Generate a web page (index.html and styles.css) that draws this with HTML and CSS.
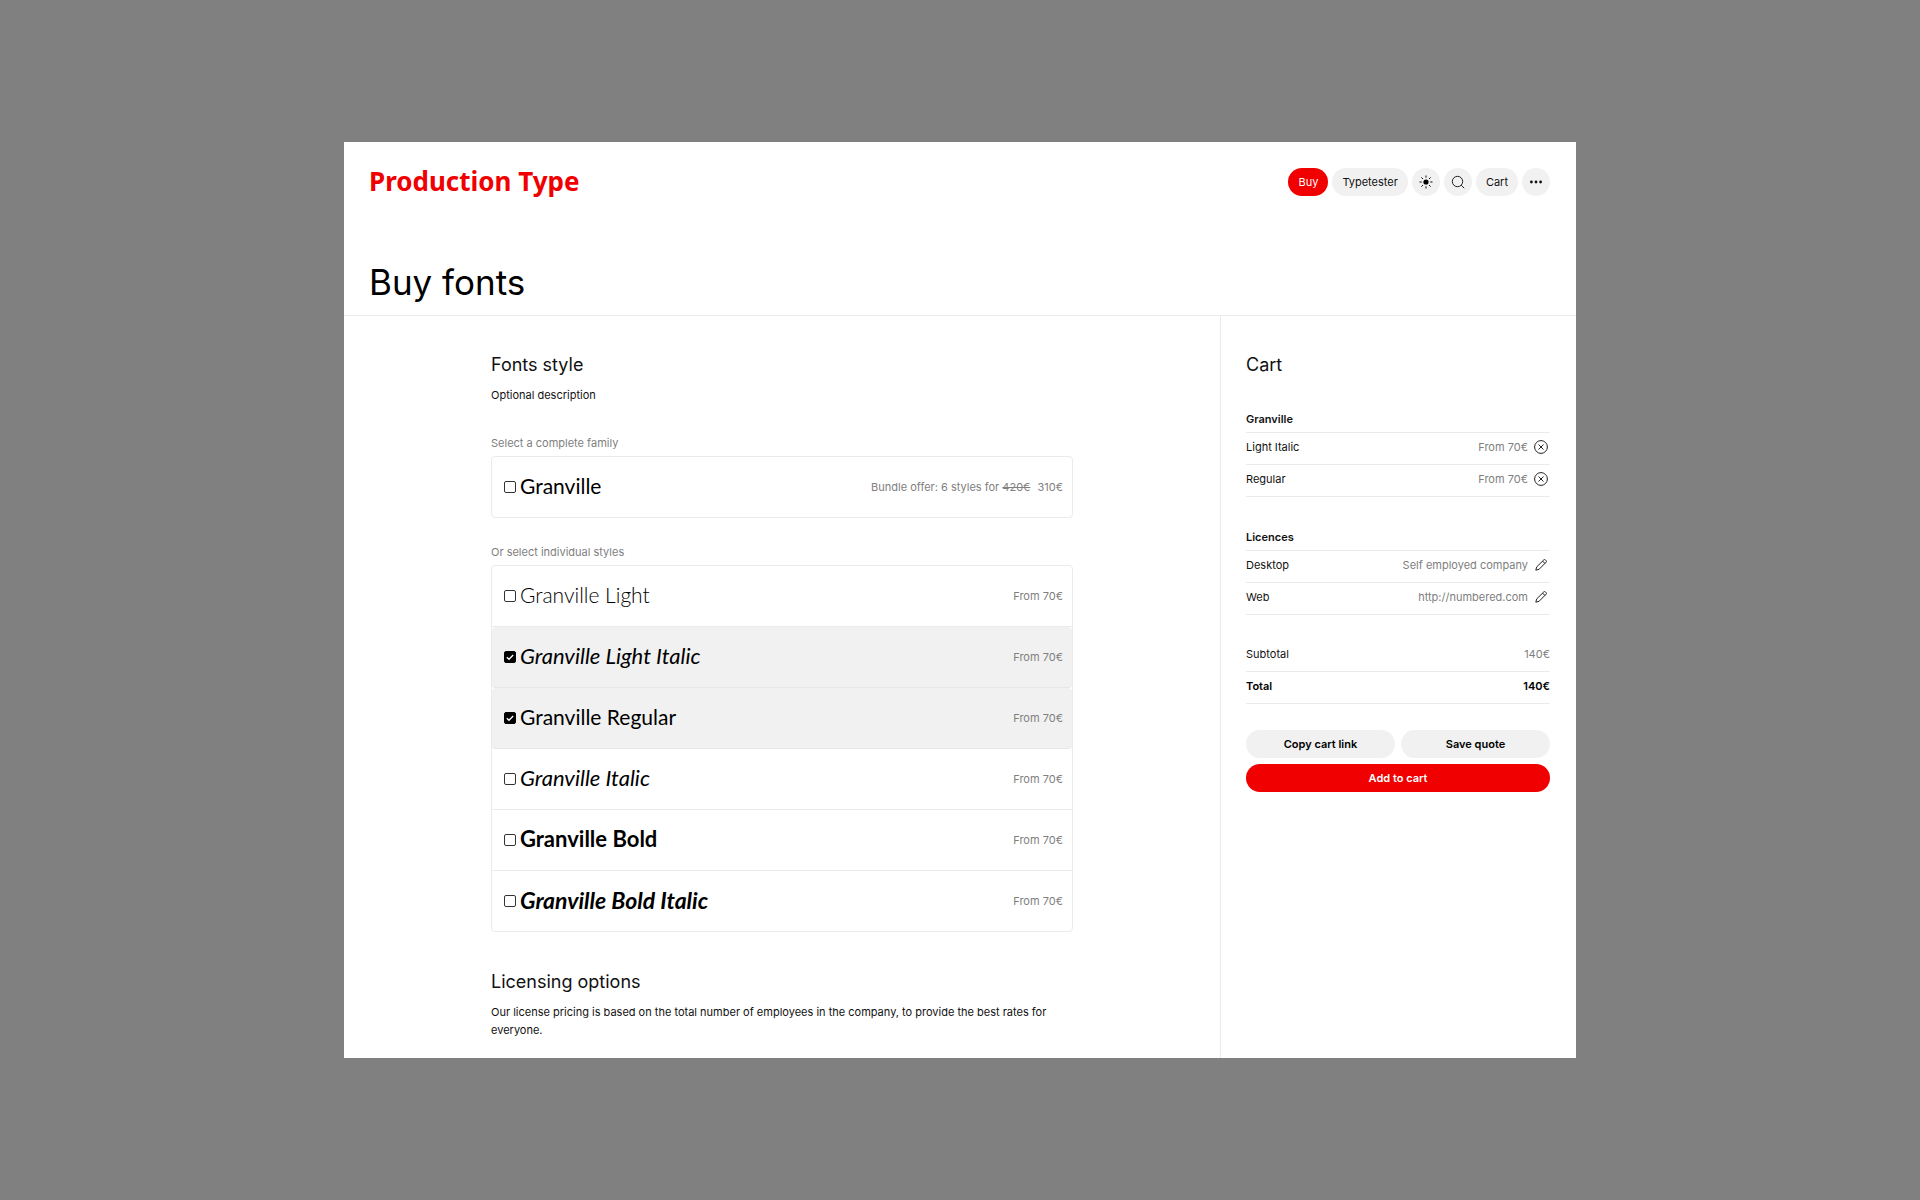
FILE: index.html
```html
<!DOCTYPE html>
<html lang="en">
<head>
<meta charset="utf-8">
<title>Buy fonts – Production Type</title>
<meta name="viewport" content="width=device-width, initial-scale=1">
<link rel="stylesheet" href="styles.css">
</head>
<body>
<div class="window">
  <header class="header">
    <div class="topbar">
      <a class="logo" href="#">Production Type</a>
      <nav class="nav">
        <a class="pill pill-primary" href="#">Buy</a>
        <a class="pill" href="#">Typetester</a>
        <button class="pill pill-icon" type="button" aria-label="Theme">
          <svg width="14" height="14" viewBox="0 0 14 14" fill="none" stroke="#111" stroke-width="1"><circle cx="7" cy="7" r="2.6" fill="#000" stroke="none"/><path d="M7 .5v2.2M7 11.3v2.2M.5 7h2.2M11.3 7h2.2M2.4 2.4 4 4M10 10l1.6 1.6M11.6 2.4 10 4M4 10l-1.6 1.6"/></svg>
        </button>
        <button class="pill pill-icon" type="button" aria-label="Search">
          <svg width="14" height="14" viewBox="0 0 14 14" fill="none" stroke="#222" stroke-width="1"><circle cx="6.5" cy="6.5" r="5.2"/><path d="m10.2 10.2 3 3"/></svg>
        </button>
        <a class="pill" href="#">Cart</a>
        <button class="pill pill-icon" type="button" aria-label="More">
          <svg width="14" height="14" viewBox="0 0 14 14" fill="#111"><circle cx="2.4" cy="7" r="1.4"/><circle cx="7" cy="7" r="1.4"/><circle cx="11.6" cy="7" r="1.4"/></svg>
        </button>
      </nav>
    </div>
    <h1 class="title">Buy fonts</h1>
  </header>

  <div class="columns">
    <main class="main">
      <div class="content">
        <section>
          <h2>Fonts style</h2>
          <p>Optional description</p>
          <fieldset class="group group-family">
            <legend>Select a complete family</legend>
            <div class="list">
              <label class="row"><input type="checkbox"><span class="name regular">Granville</span><span class="price">Bundle offer: 6 styles for <s>420€</s><span class="deal">310€</span></span></label>
            </div>
          </fieldset>
          <fieldset class="group">
            <legend>Or select individual styles</legend>
            <div class="list">
              <label class="row"><input type="checkbox"><span class="name light">Granville Light</span><span class="price">From 70€</span></label>
              <label class="row"><input type="checkbox" checked><span class="name italic">Granville Light Italic</span><span class="price">From 70€</span></label>
              <label class="row"><input type="checkbox" checked><span class="name regular">Granville Regular</span><span class="price">From 70€</span></label>
              <label class="row"><input type="checkbox"><span class="name italic">Granville Italic</span><span class="price">From 70€</span></label>
              <label class="row"><input type="checkbox"><span class="name bold">Granville Bold</span><span class="price">From 70€</span></label>
              <label class="row"><input type="checkbox"><span class="name bold-italic">Granville Bold Italic</span><span class="price">From 70€</span></label>
            </div>
          </fieldset>
        </section>
        <section class="licensing">
          <h2>Licensing options</h2>
          <p>Our license pricing is based on the total number of employees in the company, to provide the best rates for everyone.</p>
        </section>
      </div>
    </main>

    <aside class="cart">
      <h2>Cart</h2>
      <table class="lines">
        <thead><tr><th colspan="2" scope="colgroup">Granville</th></tr></thead>
        <tbody>
          <tr><td>Light Italic</td><td><div class="value">From 70€<button class="icon" type="button" aria-label="Remove Light Italic"><svg width="18" height="18" viewBox="0 0 18 18" fill="none" stroke="#222" stroke-width="1"><circle cx="9" cy="9" r="6.4"/><path d="m6.5 6.5 5 5M11.5 6.5l-5 5"/></svg></button></div></td></tr>
          <tr><td>Regular</td><td><div class="value">From 70€<button class="icon" type="button" aria-label="Remove Regular"><svg width="18" height="18" viewBox="0 0 18 18" fill="none" stroke="#222" stroke-width="1"><circle cx="9" cy="9" r="6.4"/><path d="m6.5 6.5 5 5M11.5 6.5l-5 5"/></svg></button></div></td></tr>
        </tbody>
      </table>
      <table class="lines">
        <thead><tr><th colspan="2" scope="colgroup">Licences</th></tr></thead>
        <tbody>
          <tr><td>Desktop</td><td><div class="value">Self employed company<button class="icon" type="button" aria-label="Edit desktop licence"><svg width="18" height="18" viewBox="0 0 18 18" fill="none" stroke="#222" stroke-width="1" stroke-linejoin="round"><path d="m3.8 14.2.9-3.3 7.1-7q.8-.7 1.6 0l.7.7q.7.8 0 1.6l-7 7.1zM10.600 5.100l2.300 2.300"/></svg></button></div></td></tr>
          <tr><td>Web</td><td><div class="value">http://numbered.com<button class="icon" type="button" aria-label="Edit web licence"><svg width="18" height="18" viewBox="0 0 18 18" fill="none" stroke="#222" stroke-width="1" stroke-linejoin="round"><path d="m3.8 14.2.9-3.3 7.1-7q.8-.7 1.6 0l.7.7q.7.8 0 1.6l-7 7.1zM10.600 5.100l2.300 2.300"/></svg></button></div></td></tr>
        </tbody>
      </table>
      <table class="lines totals">
        <tbody>
          <tr><td>Subtotal</td><td><div class="value">140€</div></td></tr>
          <tr class="total"><td>Total</td><td><div class="value">140€</div></td></tr>
        </tbody>
      </table>
      <div class="actions">
        <button class="action" type="button">Copy cart link</button>
        <button class="action" type="button">Save quote</button>
        <button class="action action-primary" type="button">Add to cart</button>
      </div>
    </aside>
  </div>
</div>
</body>
</html>
```
FILE: styles.css
```css
* { box-sizing: border-box; }

body {
  margin: 0;
  min-height: 100vh;
  display: flex;
  align-items: center;
  justify-content: center;
  background: #808080;
  color: #111;
  font: 11px/18px Inter, "Liberation Sans", sans-serif;
}

h1, h2, p { margin: 0; font-weight: 400; }
h2 { font-size: 18px; line-height: 26px; margin-bottom: 8px; }
button { font: inherit; color: inherit; border: 0; padding: 0; cursor: pointer; }
svg { display: block; }

.window { width: 100%; max-width: 1232px; background: #fff; }

/* Header */
.header { padding: 26px 26px 10px 25px; border-bottom: 1px solid #ebebeb; }
.topbar { display: flex; align-items: flex-start; justify-content: space-between; }
.logo {
  color: #f00000;
  font: 700 26px/26px "Noto Sans", sans-serif;
  text-decoration: none;
}
.nav { display: flex; gap: 4px; }
.pill {
  display: flex;
  align-items: center;
  justify-content: center;
  height: 28px;
  padding: 0 10px;
  border-radius: 14px;
  background: #f1f1f1;
  color: #111;
  text-decoration: none;
}
.pill-primary { background: #f00000; color: #fff; }
.pill-icon { width: 28px; padding: 0; }
.title { margin-top: 63px; color: #000; font-size: 35px; line-height: 46px; }

/* Columns */
.columns { display: grid; grid-template-columns: 1fr 356px; }
.main { padding: 36px 24px 19px; }
.content { max-width: 582px; margin: 0 auto; }
.licensing { margin-top: 37px; }

/* Style picker */
.group { min-width: 0; margin: 25px 0 0; padding: 0; border: 0; }
.group-family { margin-top: 30px; }
legend { padding: 0 0 4px; color: #808080; }
.list { border: 1px solid #ebebeb; border-radius: 4px; }
.row {
  display: flex;
  align-items: center;
  height: 61px;
  padding: 0 9px 0 12px;
  border-bottom: 1px solid #ebebeb;
}
.row:last-child { height: 60px; border-bottom: 0; }
.row:has(:checked) { background: #f1f1f1; border-color: #e6e6e6; border-radius: 4px; }
.row input {
  appearance: none;
  flex: none;
  width: 12px;
  height: 12px;
  margin: 0 4px 0 0;
  border: 1px solid #333;
  border-radius: 2px;
}
.row input:checked {
  border-color: #000;
  background: #000 url("data:image/svg+xml,%3Csvg xmlns='http://www.w3.org/2000/svg' viewBox='0 0 10 10'%3E%3Cpath d='M1.800 5.200 4 7.300 8.200 3' fill='none' stroke='white' stroke-width='1.300'/%3E%3C/svg%3E");
}
.name { padding-bottom: 2px; color: #000; font-family: Lato, sans-serif; font-size: 21px; line-height: 28px; }
.light { font-weight: 300; }
.regular { font-weight: 400; }
.italic { font-size: 22px; font-style: italic; }
.bold { font-size: 22px; font-weight: 700; }
.bold-italic { font-size: 23px; font-style: italic; font-weight: 700; }
.price { margin-left: auto; color: #808080; }
.deal { margin-left: 7px; }

/* Cart */
.cart { padding: 36px 26px 24px 25px; border-left: 1px solid #ebebeb; }
.cart h2 { margin-bottom: 32px; }
.lines { width: 100%; margin-bottom: 31px; border-collapse: separate; border-spacing: 0; }
.lines th { padding: 0 0 4px; border-bottom: 1px solid #ebebeb; font-weight: 600; text-align: left; }
.lines td { padding: 5px 0 8px; border-bottom: 1px solid #ebebeb; }
.value { display: flex; justify-content: flex-end; align-items: center; gap: 4px; color: #808080; }
.icon { width: 18px; height: 18px; background: none; }
.totals { margin: -6px 0 26px; }
.total, .total .value { color: #000; font-weight: 600; }
.actions { display: grid; grid-template-columns: 1fr 1fr; gap: 6px; }
.action { height: 28px; border-radius: 14px; background: #f1f1f1; color: #000; font-weight: 600; }
.action-primary { grid-column: 1 / -1; background: #f00000; color: #fff; }
```
